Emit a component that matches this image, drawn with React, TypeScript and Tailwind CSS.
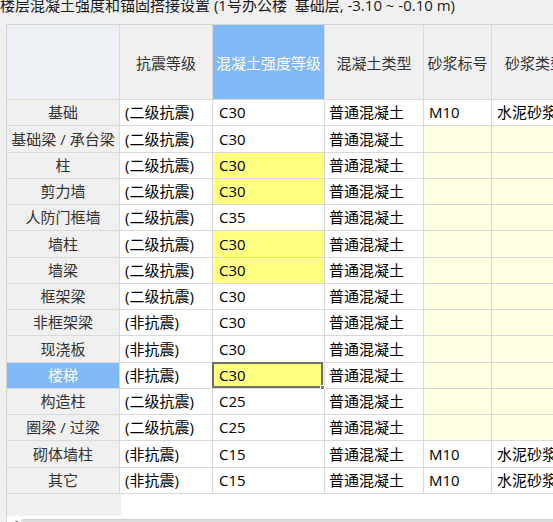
import React from "react";

type Row = {
  name: string;
  seis: string;
  grade: string;
  yellow?: boolean;
  active?: boolean;
  mortar?: string;
  mtype?: string;
};

const rows: Row[] = [
  { name: "基础", seis: "(二级抗震)", grade: "C30", mortar: "M10", mtype: "水泥砂浆" },
  { name: "基础梁 / 承台梁", seis: "(二级抗震)", grade: "C30" },
  { name: "柱", seis: "(二级抗震)", grade: "C30", yellow: true },
  { name: "剪力墙", seis: "(二级抗震)", grade: "C30", yellow: true },
  { name: "人防门框墙", seis: "(二级抗震)", grade: "C35" },
  { name: "墙柱", seis: "(二级抗震)", grade: "C30", yellow: true },
  { name: "墙梁", seis: "(二级抗震)", grade: "C30", yellow: true },
  { name: "框架梁", seis: "(二级抗震)", grade: "C30" },
  { name: "非框架梁", seis: "(非抗震)", grade: "C30" },
  { name: "现浇板", seis: "(非抗震)", grade: "C30" },
  { name: "楼梯", seis: "(非抗震)", grade: "C30", yellow: true, active: true },
  { name: "构造柱", seis: "(二级抗震)", grade: "C25" },
  { name: "圈梁 / 过梁", seis: "(二级抗震)", grade: "C25" },
  { name: "砌体墙柱", seis: "(非抗震)", grade: "C15", mortar: "M10", mtype: "水泥砂浆" },
  { name: "其它", seis: "(非抗震)", grade: "C15", mortar: "M10", mtype: "水泥砂浆" },
];

const cell = "box-border border-r border-b border-[#d9d9d9] flex items-center shrink-0";

export default function App() {
  return (
    <div
      className="w-[553px] h-[522px] overflow-hidden bg-[#f0f0f0] text-[15px] flex flex-col"
      style={{ fontFamily: '"Open Sans", "Noto Sans CJK SC", sans-serif' }}
    >
      <div className="h-[24px] shrink-0 overflow-hidden">
        <div className="leading-[15px] -mt-[2px] text-[15px] text-[#1a1a1a] whitespace-nowrap">
          楼层混凝土强度和锚固搭接设置 (1号办公楼&nbsp;&nbsp;基础层, -3.10 ~ -0.10 m)
        </div>
      </div>
      <div className="ml-[6px] flex-1 flex flex-col border-l border-t border-[#d2d2d2] w-[600px] min-h-0">
        {/* header */}
        <div className="flex h-[75px] shrink-0">
          <div className={`${cell} w-[113px] bg-[#edf0f5]`} />
          <div className={`${cell} w-[93px] bg-[#f0f0f0] justify-center pt-[3px] text-[#333]`}>抗震等级</div>
          <div className={`${cell} w-[112px] bg-[#80b9f8] justify-center pt-[3px] text-white`}>混凝土强度等级</div>
          <div className={`${cell} w-[99px] bg-[#f0f0f0] justify-center pt-[3px] text-[#333]`}>混凝土类型</div>
          <div className={`${cell} w-[68px] bg-[#f0f0f0] justify-center pt-[3px] text-[#333]`}>砂浆标号</div>
          <div className={`${cell} w-[110px] bg-[#f0f0f0] pl-[13px] pt-[3px] text-[#333] whitespace-nowrap`}>砂浆类型</div>
        </div>
        {rows.map((r, i) => {
          const h = i % 4 === 1 ? "h-[27px]" : "h-[26px]";
          const hasMortar = !!r.mortar;
          return (
            <div key={r.name} className={`flex shrink-0 ${h}`}>
              <div
                className={`${cell} w-[113px] justify-center whitespace-nowrap ${
                  r.active ? "bg-[#80b9f8] text-white" : "bg-[#f0f0f0] text-[#333]"
                }`}
              >
                {r.name}
              </div>
              <div className={`${cell} w-[93px] bg-white pl-[5px] text-black whitespace-nowrap`}>{r.seis}</div>
              <div
                className={`${cell} relative w-[112px] pl-[6px] text-black ${
                  r.yellow ? "bg-[#ffff80]" : "bg-white"
                }`}
              >
                {r.grade}
                {r.active && (
                  <div className="absolute -left-px -top-px right-[1px] bottom-0 border-2 border-[#6f6f6f]">
                    <div className="absolute -right-[4px] -bottom-[4px] w-[5px] h-[5px] bg-[#7a7a7a] border border-white" />
                  </div>
                )}
              </div>
              <div className={`${cell} w-[99px] bg-white pl-[4px] text-black whitespace-nowrap`}>普通混凝土</div>
              <div
                className={`${cell} w-[68px] pl-[5px] text-black ${hasMortar ? "bg-white" : "bg-[#ffffe1]"}`}
              >
                {r.mortar ?? ""}
              </div>
              <div
                className={`${cell} w-[110px] pl-[5px] text-black whitespace-nowrap ${
                  hasMortar ? "bg-white" : "bg-[#ffffe1]"
                }`}
              >
                {r.mtype ?? ""}
              </div>
            </div>
          );
        })}
        {/* filler */}
        <div className="flex h-[22px] shrink-0">
          <div className="w-[114px] bg-[#f0f0f0]" />
          <div className="flex-1 bg-white" />
        </div>
        <div className="flex-1 bg-white flex items-start pt-[3px]">
          <div className="w-[14px] flex justify-center text-[9px] leading-[10px] text-[#555] pt-[1px]">◀</div>
          <div className="flex-1 h-[10px] bg-[#dcdcdc] rounded-tl-[3px] border-t border-[#cfcfcf]" />
        </div>
      </div>
    </div>
  );
}
